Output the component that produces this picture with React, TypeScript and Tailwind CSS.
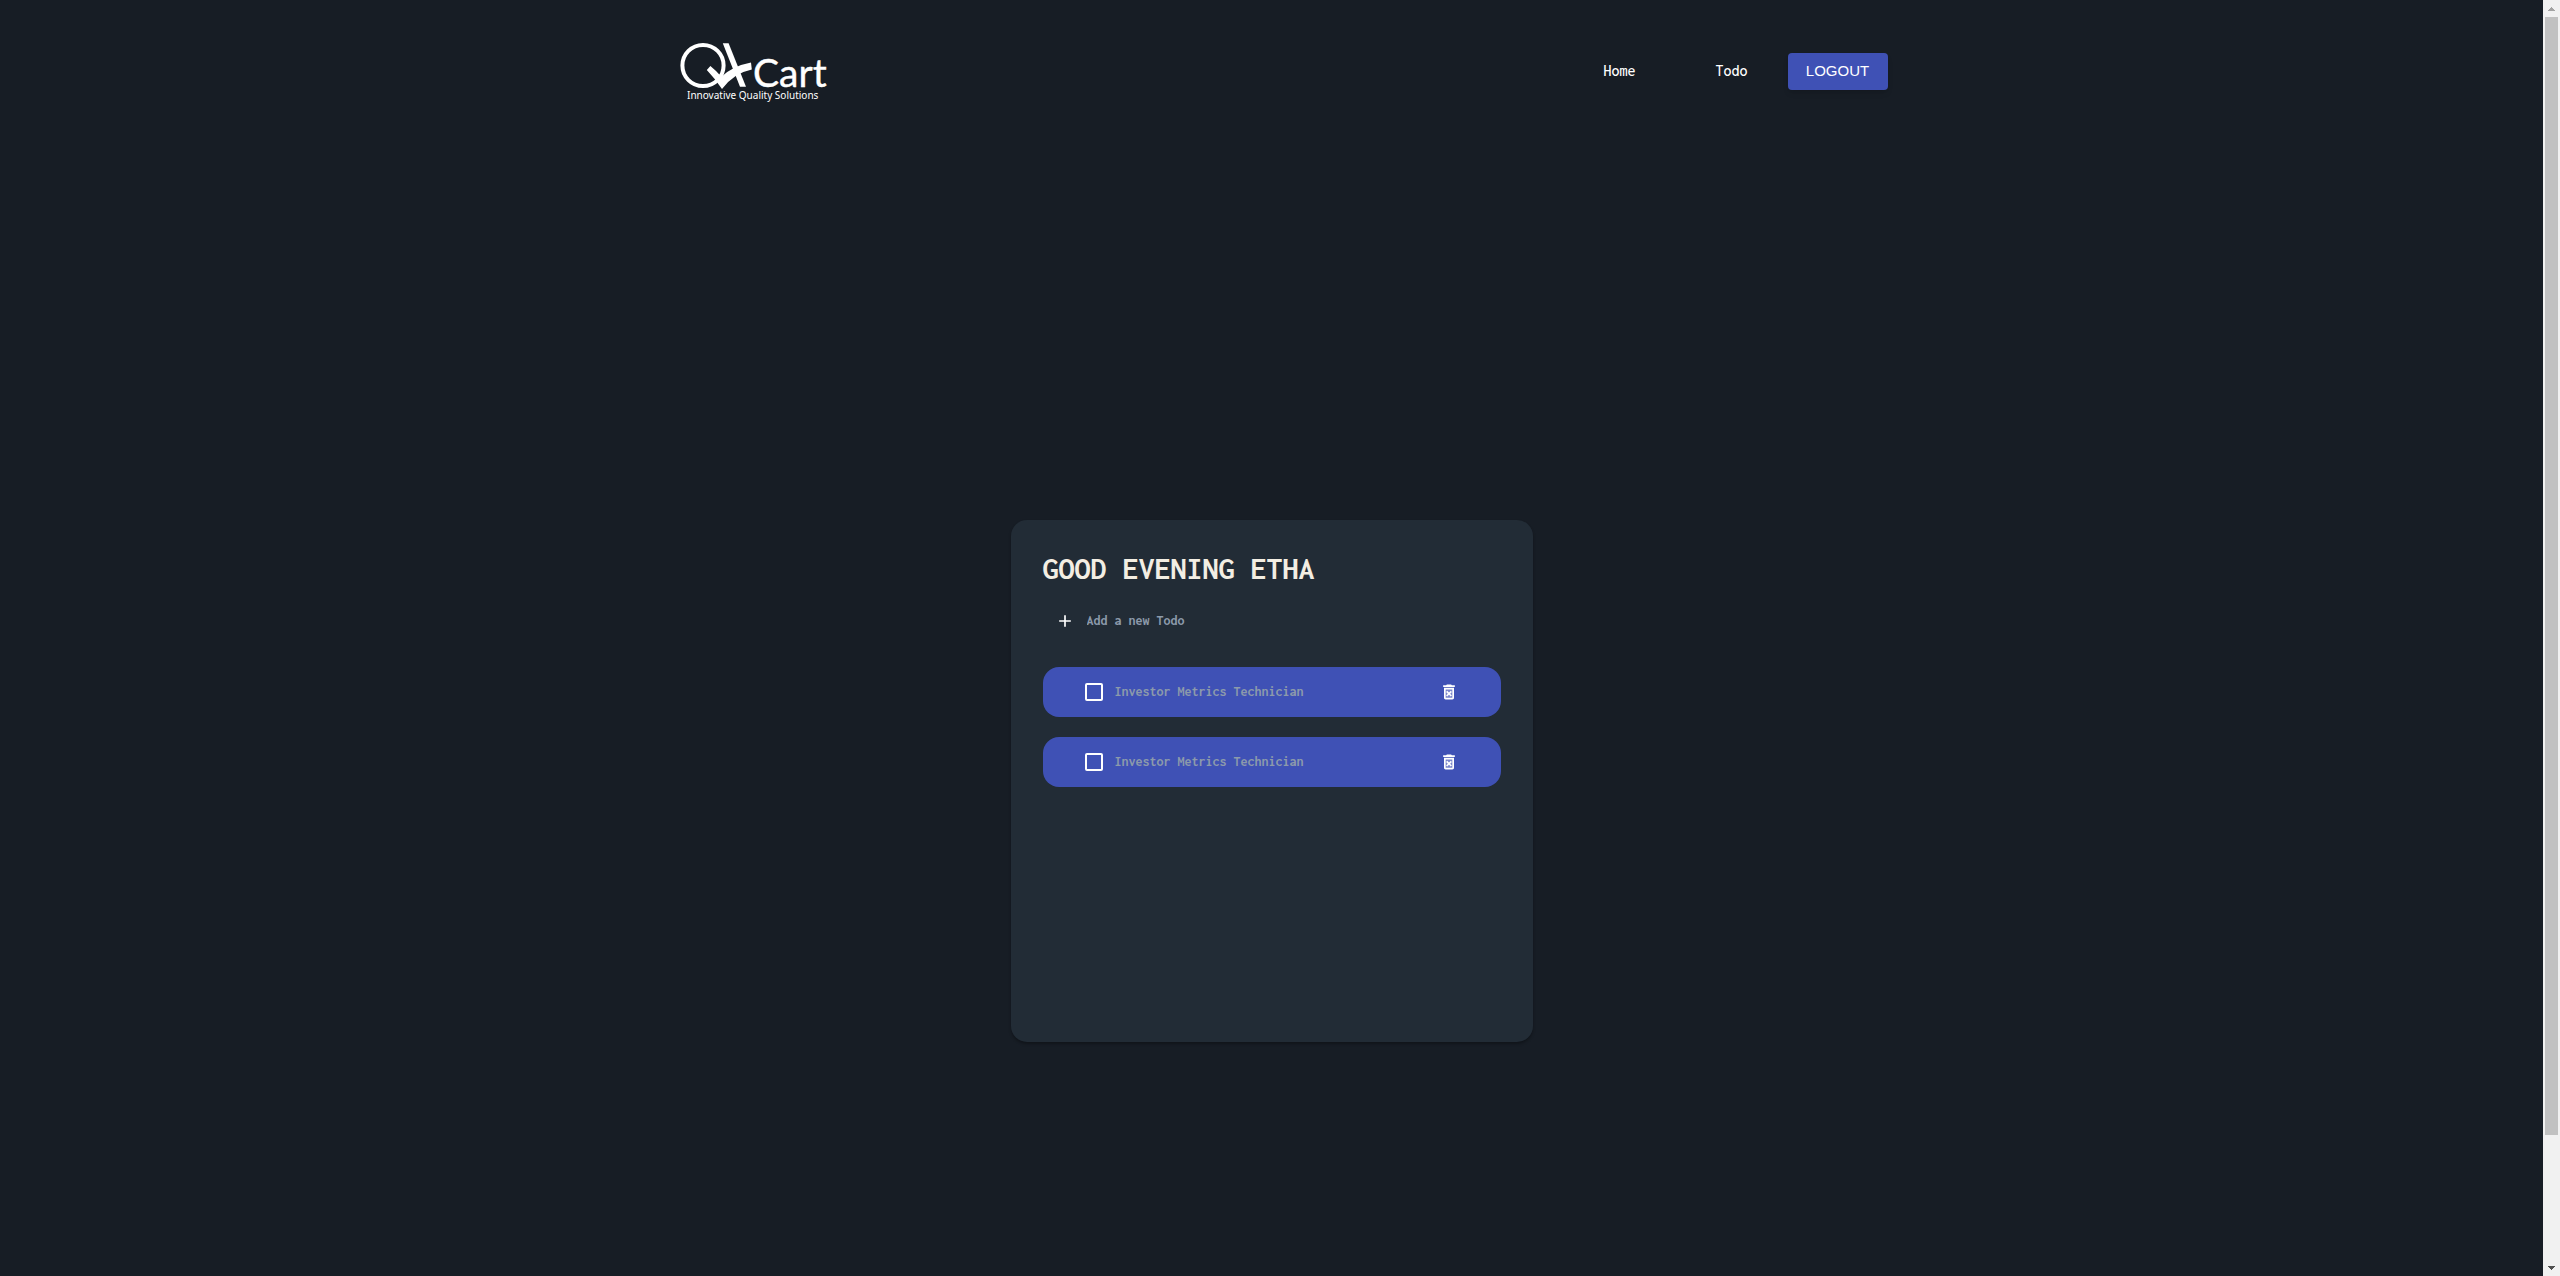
import { useState } from "react";

function Logo() {
  return (
    <svg width="150" height="60" viewBox="0 0 150 60" role="img" aria-label="QKart Innovative Quality Solutions" fill="#fff">
      <circle cx="23" cy="23.5" r="20.6" fill="none" stroke="#fff" strokeWidth="4" />
      <path d="M26.8 28 L30.4 24 Q36 28.5 41.4 34.8 Q53 24 71 20.6 L71.8 27.5 Q54 31 42 47 Q35 36.5 26.8 28 Z" />
      <path d="M42.8 1.2 H48.6 L66 44.8 H60 Z" />
      <text x="73" y="45" fontFamily="Lato, sans-serif" fontSize="39" stroke="#fff" strokeWidth="0.4">Cart</text>
      <text x="7" y="57" fontFamily="'Noto Sans', sans-serif" fontSize="10">Innovative Quality Solutions</text>
    </svg>
  );
}

function AddIcon() {
  return (
    <svg viewBox="0 0 24 24" className="size-5" fill="currentColor" aria-hidden="true">
      <path d="M19 13h-6v6h-2v-6H5v-2h6V5h2v6h6v2z" />
    </svg>
  );
}

function DeleteIcon() {
  return (
    <svg viewBox="0 0 24 24" className="size-5" fill="currentColor" aria-hidden="true">
      <path d="M7 8h10v12H7z" opacity="0.3" />
      <path d="M14.12 10.47 12 12.59l-2.13-2.12-1.41 1.41L10.59 14l-2.12 2.12 1.41 1.41L12 15.41l2.12 2.12 1.41-1.41L13.41 14l2.12-2.12zM15.5 4l-1-1h-5l-1 1H5v2h14V4zM6 19c0 1.1.9 2 2 2h8c1.1 0 2-.9 2-2V7H6v12zM8 9h8v10H8V9z" />
    </svg>
  );
}

type Todo = { id: number; text: string; done: boolean };

function TodoRow({ todo, onToggle, onDelete }: { todo: Todo; onToggle: () => void; onDelete: () => void }) {
  return (
    <li className="flex h-[50px] items-center rounded-2xl bg-[#3f51b5] px-[42px]">
      <label className="flex grow items-center gap-3">
        <input
          type="checkbox"
          checked={todo.done}
          onChange={onToggle}
          className="size-[18px] appearance-none rounded-xs border-2 border-white checked:bg-white"
        />
        <span className="text-sm font-bold text-[#8c9aab]">{todo.text}</span>
      </label>
      <button type="button" aria-label="Delete todo" onClick={onDelete} className="text-white">
        <DeleteIcon />
      </button>
    </li>
  );
}

function ScrollBar() {
  return (
    <div aria-hidden="true" className="flex w-[17px] shrink-0 flex-col bg-[#f1f1f1]">
      <div className="flex h-[17px] items-center justify-center">
        <svg width="7" height="4" viewBox="0 0 7 4" fill="#a3a3a3">
          <path d="M3 0h1v1h1v1h1v1h1v1H0V3h1V2h1V1h1z" />
        </svg>
      </div>
      <div className="flex grow flex-col px-0.5">
        <div className="h-[90%] bg-[#c1c1c1]" />
      </div>
      <div className="flex h-[17px] items-center justify-center">
        <svg width="7" height="4" viewBox="0 0 7 4" fill="#505050">
          <path d="M0 0h7v1H6v1H5v1H4v1H3V3H2V2H1V1H0z" />
        </svg>
      </div>
    </div>
  );
}

export default function App() {
  const [draft, setDraft] = useState("");
  const [todos, setTodos] = useState<Todo[]>([
    { id: 1, text: "Investor Metrics Technician", done: false },
    { id: 2, text: "Investor Metrics Technician", done: false },
  ]);

  const addTodo = () => {
    if (!draft.trim()) return;
    setTodos([...todos, { id: Date.now(), text: draft, done: false }]);
    setDraft("");
  };

  return (
    <div className="flex h-screen bg-[#171d25] font-['Inconsolata','Noto_Sans_Mono_CJK_SC','Liberation_Mono',monospace]">
      <div className="flex min-w-0 grow flex-col">
        <header className="mx-auto flex w-full max-w-[1280px] items-center justify-between px-6 pt-[42px]">
          <a href="#home" className="ml-6">
            <Logo />
          </a>
          <nav className="mb-0.5 flex items-center">
            <a href="#home" className="mr-20 text-base font-medium text-white">Home</a>
            <a href="#todo" className="mr-10 text-base font-medium text-white">Todo</a>
            <button
              type="button"
              className="h-[37px] w-[100px] rounded-sm bg-[#3f51b5] font-['Liberation_Sans',Arial,sans-serif] text-[15px] text-white shadow-md"
            >
              LOGOUT
            </button>
          </nav>
        </header>
        <main className="flex grow items-center justify-center pt-46">
          <section className="min-h-[522px] w-[522px] rounded-2xl bg-[#222c36] p-8 shadow-[0_2px_3px_rgba(0,0,0,0.3)]">
            <h1 className="text-[32px] leading-[34px] font-bold text-[#f3eee3]">GOOD EVENING ETHA</h1>
            <form
              className="mt-5 mb-[31px] flex h-[30px] items-center gap-3 pl-3"
              onSubmit={(e) => {
                e.preventDefault();
                addTodo();
              }}
            >
              <button type="submit" aria-label="Add todo" className="text-white">
                <AddIcon />
              </button>
              <input
                aria-label="New todo"
                placeholder="Add a new Todo"
                value={draft}
                onChange={(e) => setDraft(e.target.value)}
                className="grow bg-transparent text-sm font-bold text-[#f3eee3] outline-none placeholder:text-[#8c9aab]"
              />
            </form>
            <ul className="flex flex-col gap-5">
              {todos.map((t) => (
                <TodoRow
                  key={t.id}
                  todo={t}
                  onToggle={() => setTodos(todos.map((x) => (x.id === t.id ? { ...x, done: !x.done } : x)))}
                  onDelete={() => setTodos(todos.filter((x) => x.id !== t.id))}
                />
              ))}
            </ul>
          </section>
        </main>
      </div>
      <ScrollBar />
    </div>
  );
}
